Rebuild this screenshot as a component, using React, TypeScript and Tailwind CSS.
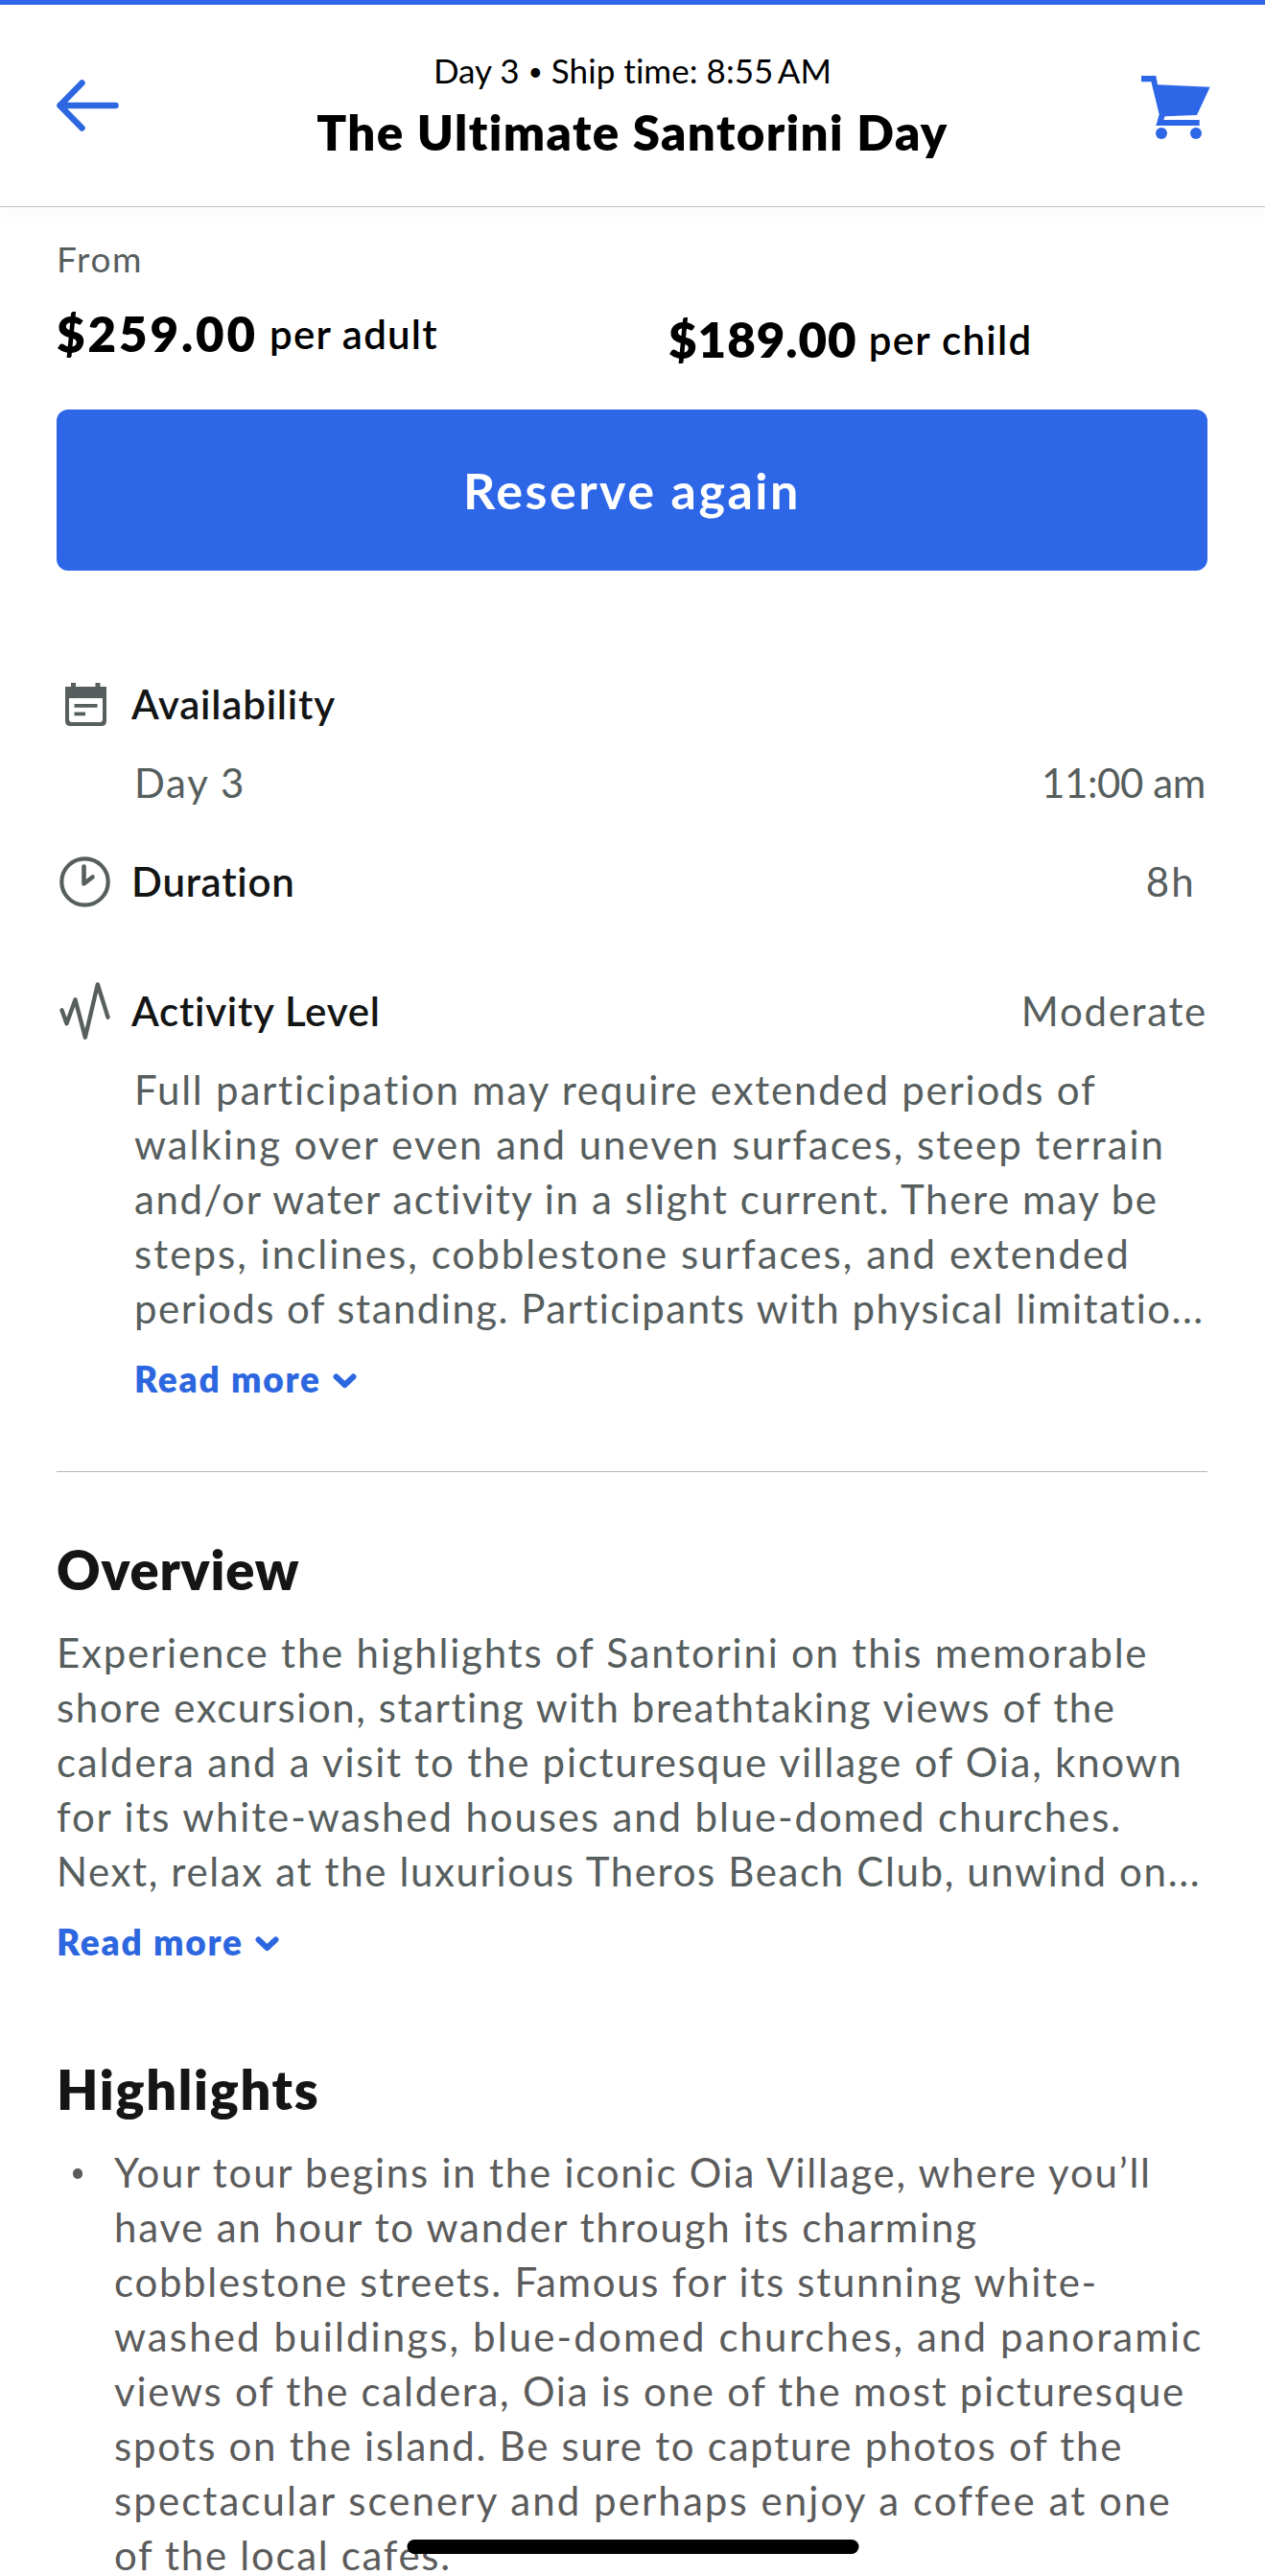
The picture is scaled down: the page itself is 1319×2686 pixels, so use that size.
import React from "react";

interface Line {
    text: string;
    spacing: string;
}

interface DetailProps {
    icon: React.ReactNode;
    title: string;
    titleSpacing: string;
    value?: React.ReactNode;
    className?: string;
}

const activityText: Line[] = [
    { text: "Full participation may require extended periods of", spacing: "tracking-[1.78px]" },
    { text: "walking over even and uneven surfaces, steep terrain", spacing: "tracking-[1.97px]" },
    { text: "and/or water activity in a slight current. There may be", spacing: "tracking-[1.59px]" },
    { text: "steps, inclines, cobblestone surfaces, and extended", spacing: "tracking-[2.04px]" },
    { text: "periods of standing. Participants with physical limitatio...", spacing: "tracking-[1.46px]" },
];

const overviewText: Line[] = [
    { text: "Experience the highlights of Santorini on this memorable", spacing: "tracking-[1.78px]" },
    { text: "shore excursion, starting with breathtaking views of the", spacing: "tracking-[1.57px]" },
    { text: "caldera and a visit to the picturesque village of Oia, known", spacing: "tracking-[1.76px]" },
    { text: "for its white-washed houses and blue-domed churches.", spacing: "tracking-[1.87px]" },
    { text: "Next, relax at the luxurious Theros Beach Club, unwind on...", spacing: "tracking-[1.63px]" },
];

const highlightText: Line[] = [
    { text: "Your tour begins in the iconic Oia Village, where you’ll", spacing: "tracking-[1.77px]" },
    { text: "have an hour to wander through its charming", spacing: "tracking-[1.76px]" },
    { text: "cobblestone streets. Famous for its stunning white-", spacing: "tracking-[1.7px]" },
    { text: "washed buildings, blue-domed churches, and panoramic", spacing: "tracking-[2.12px]" },
    { text: "views of the caldera, Oia is one of the most picturesque", spacing: "tracking-[1.74px]" },
    { text: "spots on the island. Be sure to capture photos of the", spacing: "tracking-[1.73px]" },
    { text: "spectacular scenery and perhaps enjoy a coffee at one", spacing: "tracking-[2.08px]" },
    { text: "of the local cafes.", spacing: "tracking-[1.69px]" },
];

const BackArrow = (
    <svg width="66" height="54" viewBox="0 0 66 54" fill="none" stroke="#2d67e0" strokeWidth="6.5" strokeLinecap="round" strokeLinejoin="round">
        <path d="M26.5 3.5 3.5 27 26.5 50.5M3.5 27H61.5" />
    </svg>
);

const Cart = (
    <svg width="74" height="68" viewBox="57 54 222 204" fill="#2d67e8">
        <path d="M60 57H106L111 85L275 92L234 180L134 184L130 195H242V213H106L116 178L91 76H60Z" />
        <circle cx="123" cy="237" r="18" />
        <circle cx="231" cy="237" r="18" />
    </svg>
);

const Calendar = (
    <svg className="ml-[2px]" width="43" height="45" viewBox="0 0 43 45" fill="#575e5e">
        <path
            fillRule="evenodd"
            d="M0 4H6V0H11V4H31.5V0H36.5V4H43V39.5Q43 45 37.5 45H5.5Q0 45 0 39.5ZM4 16V38Q4 41 7 41H36Q39 41 39 38V16Z"
        />
        <path d="M9.5 22H33.5V25.7H9.5ZM9.5 30.5H21V34.3H9.5Z" />
    </svg>
);

const Clock = (
    <svg width="53" height="53" viewBox="0 0 53 53" fill="none" stroke="#575e5e" strokeLinecap="round" strokeLinejoin="round">
        <circle cx="26.5" cy="26.5" r="24.2" strokeWidth="4.2" />
        <path d="M25.5 10.5V28.5L34.5 21.5" strokeWidth="4.6" />
    </svg>
);

const Pulse = (
    <svg width="53" height="60" viewBox="64 1002 158 180" fill="none" stroke="#575e5e" strokeWidth="13" strokeLinecap="round" strokeLinejoin="round">
        <path d="M71 1090 86 1132 113 1057 144 1175 183 1009 215 1112" />
    </svg>
);

function TextLines({ lines }: { lines: Line[] }) {
    return (
        <p className="text-[42px] leading-[57px]">
            {lines.map((line, index) => (
                <span key={index} className={`block whitespace-nowrap ${line.spacing}`}>
                    {line.text}
                </span>
            ))}
        </p>
    );
}

function ReadMore() {
    return (
        <button className="flex items-center text-[37px] leading-[44px] font-extrabold text-[#2d67e0]">
            <span className="tracking-[1.8px]">Read more</span>
            <svg className="mt-[4px] ml-[12px]" width="25" height="16" viewBox="0 0 25 16" fill="none" stroke="currentColor" strokeWidth="6" strokeLinecap="round" strokeLinejoin="round">
                <path d="M3.5 3.5 12.5 12 21.5 3.5" />
            </svg>
        </button>
    );
}

function Detail({ icon, title, titleSpacing, value, className }: DetailProps) {
    return (
        <div className={`flex h-[50px] items-center text-[42px] leading-[50px] ${className}`}>
            <div className="flex w-[58px] justify-center">{icon}</div>
            <h3 className={`ml-[20px] font-semibold text-[#141515] ${titleSpacing}`}>{title}</h3>
            {value && <div className="ml-auto">{value}</div>}
        </div>
    );
}

export default function App() {
    return (
        <div className="relative h-[2686px] w-full overflow-hidden bg-white font-['Lato',sans-serif] text-[#575e5e]">
            <header className="grid h-[216px] grid-cols-[1fr_auto_1fr] border-t-[5px] border-b border-t-[#2d67e8] border-b-[#bfbfc2] px-[56px] shadow-[0_10px_10px_rgba(0,0,0,0.015)]">
                <button className="mt-[78px] ml-[3px] self-start justify-self-start">{BackArrow}</button>
                <div className="pt-[48px] text-center text-black">
                    <p className="text-[35px] leading-[40px] tracking-[0.05px]">
                        Day 3 <span className="align-[3px] text-[26px] leading-none">•</span> Ship time: 8:55&#8201;AM
                    </p>
                    <h1 className="mt-[15px] text-[51px] leading-[60px] font-extrabold tracking-[1.4px]">
                        The Ultimate Santorini Day
                    </h1>
                </div>
                <button className="mt-[73px] self-start justify-self-end">{Cart}</button>
            </header>

            <main className="pt-[32px] pr-[60px] pl-[59px]">
                <p className="text-[37px] leading-[44px] tracking-[1.7px]">From</p>
                <div className="mt-[26px] grid grid-cols-[638px_1fr] text-black">
                    <div className="flex h-[60px] items-center">
                        <span className="text-[51px] leading-[60px] font-extrabold tracking-[2.9px]">$259.00</span>
                        <span className="ml-[12px] text-[42px] leading-[50px] font-semibold tracking-[1.2px]">per adult</span>
                    </div>
                    <div className="mt-[6px] flex h-[60px] items-center">
                        <span className="text-[51px] leading-[60px] font-extrabold tracking-[1px]">$189.00</span>
                        <span className="ml-[12px] text-[42px] leading-[50px] font-semibold tracking-[1.3px]">per child</span>
                    </div>
                </div>
                <button className="mt-[43px] flex h-[168px] w-full items-center justify-center rounded-[12px] bg-[#2d67e8] text-[52px] leading-[60px] font-bold tracking-[2.5px] text-white">
                    Reserve again
                </button>

                <section>
                    <Detail className="mt-[114px]" icon={Calendar} title="Availability" titleSpacing="tracking-[0.8px]" />
                    <div className="mt-[32px] flex justify-between pr-[2px] pl-[81px] text-[42px] leading-[50px]">
                        <span className="tracking-[1.7px]">Day 3</span>
                        <span className="tracking-[-0.4px]">11:00 am</span>
                    </div>
                    <Detail
                        className="mt-[53px]"
                        icon={Clock}
                        title="Duration"
                        titleSpacing="tracking-[0.75px]"
                        value={<span className="pr-[12px] tracking-[2.2px]">8h</span>}
                    />
                    <Detail
                        className="mt-[85px]"
                        icon={Pulse}
                        title="Activity Level"
                        titleSpacing="tracking-[0.75px]"
                        value={<span className="tracking-[1.7px]">Moderate</span>}
                    />
                    <div className="mt-[29px] pl-[81px]">
                        <TextLines lines={activityText} />
                        <div className="mt-[23px]">
                            <ReadMore />
                        </div>
                    </div>
                </section>

                <hr className="mt-[74px] border-t border-[#b4b6b6]" />

                <section className="pt-[69px]">
                    <h2 className="text-[56px] leading-[66px] font-extrabold tracking-[0.8px] text-[#141515]">Overview</h2>
                    <div className="mt-[25px]">
                        <TextLines lines={overviewText} />
                    </div>
                    <div className="mt-[23px]">
                        <ReadMore />
                    </div>
                </section>

                <section className="pt-[99px]">
                    <h2 className="text-[56px] leading-[66px] font-extrabold tracking-[1.7px] text-[#141515]">Highlights</h2>
                    <ul className="mt-[25px] text-[#5c5c5c]">
                        <li className="flex">
                            <span className="mt-[24px] mr-[33px] ml-[17px] h-[11px] w-[10px] shrink-0 rounded-full bg-[#5c5c5c]" />
                            <TextLines lines={highlightText} />
                        </li>
                    </ul>
                </section>
            </main>

            {/* home indicator */}
            <div className="absolute bottom-[23px] left-1/2 h-[15px] w-[471px] -translate-x-1/2 rounded-full bg-black" />
        </div>
    );
}
